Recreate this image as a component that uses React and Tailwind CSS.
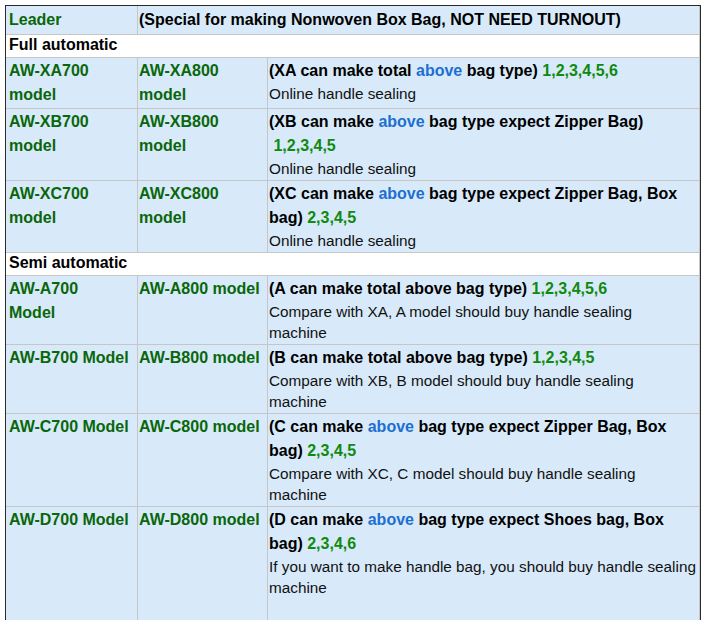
import { clsx } from "clsx";
import { twMerge } from "tailwind-merge";

const cn = (...args) => twMerge(clsx(args));

const green = "text-[#0a660a]";
const nums = "text-[#10890f]";
const blue = "text-[#1c6fd1]";

function Cell({ className, children, white }) {
  return (
    <div
      className={cn(
        "border-b border-r border-[#c6c6c6] py-px",
        white ? "bg-white" : "bg-[#d8eaf9]",
        className,
      )}
    >
      {children}
    </div>
  );
}

function Model({ lines }) {
  return (
    <div className={cn("font-bold leading-6", green)}>
      {lines.map((l) => (
        <div key={l} className="whitespace-nowrap">{l}</div>
      ))}
    </div>
  );
}

function Head({ children }) {
  return <div className="whitespace-nowrap font-bold leading-6 text-black">{children}</div>;
}

function Note({ children }) {
  return <div className="whitespace-nowrap text-[15.3px] leading-[21px] text-[#111]">{children}</div>;
}

function Section({ children }) {
  return (
    <Cell white className="col-span-3 pb-[2px] pl-[3px] pt-0 font-bold leading-5 text-black">
      {children}
    </Cell>
  );
}

function Row({ left, mid, children, tall }) {
  return (
    <>
      <Cell className="pl-[3px]"><Model lines={left} /></Cell>
      <Cell className="pl-px"><Model lines={mid} /></Cell>
      <Cell className={cn("pl-px", tall && "min-h-[130px]")}>{children}</Cell>
    </>
  );
}

export default function App() {
  return (
    <div className="min-h-[620px] bg-white pl-[5px] pt-[5px] font-['Liberation_Sans',Arial,sans-serif] text-[16px]">
      <div className="w-[696px] border-l border-r border-t border-[#2a2a2a]">
        <div className="grid grid-cols-[132px_130px_432px]">
          <Cell className={cn("py-[2px] pl-[3px] font-bold leading-6", green)}>Leader</Cell>
          <Cell className="col-span-2 py-[2px] pl-px font-bold leading-6 text-black">
            (Special for making Nonwoven Box Bag, NOT NEED TURNOUT)
          </Cell>

          <Section>Full automatic</Section>

          <Row left={["AW-XA700", "model"]} mid={["AW-XA800", "model"]}>
            <Head>
              (XA can make total <span className={blue}>above</span> bag type){" "}
              <span className={nums}>1,2,3,4,5,6</span>
            </Head>
            <Note>Online handle sealing</Note>
          </Row>

          <Row left={["AW-XB700", "model"]} mid={["AW-XB800", "model"]}>
            <Head>
              (XB can make <span className={blue}>above</span> bag type expect Zipper Bag)
            </Head>
            <Head>
              <span className={nums}>{"\u00a01,2,3,4,5"}</span>
            </Head>
            <Note>Online handle sealing</Note>
          </Row>

          <Row left={["AW-XC700", "model"]} mid={["AW-XC800", "model"]}>
            <Head>
              (XC can make <span className={blue}>above</span> bag type expect Zipper Bag, Box
            </Head>
            <Head>
              bag) <span className={nums}>2,3,4,5</span>
            </Head>
            <Note>Online handle sealing</Note>
          </Row>

          <Section>Semi automatic</Section>

          <Row left={["AW-A700", "Model"]} mid={["AW-A800 model"]}>
            <Head>
              (A can make total above bag type) <span className={nums}>1,2,3,4,5,6</span>
            </Head>
            <Note>Compare with XA, A model should buy handle sealing</Note>
            <Note>machine</Note>
          </Row>

          <Row left={["AW-B700 Model"]} mid={["AW-B800 model"]}>
            <Head>
              (B can make total above bag type) <span className={nums}>1,2,3,4,5</span>
            </Head>
            <Note>Compare with XB, B model should buy handle sealing</Note>
            <Note>machine</Note>
          </Row>

          <Row left={["AW-C700 Model"]} mid={["AW-C800 model"]}>
            <Head>
              (C can make <span className={blue}>above</span> bag type expect Zipper Bag, Box
            </Head>
            <Head>
              bag) <span className={nums}>2,3,4,5</span>
            </Head>
            <Note>Compare with XC, C model should buy handle sealing</Note>
            <Note>machine</Note>
          </Row>

          <Row left={["AW-D700 Model"]} mid={["AW-D800 model"]} tall>
            <Head>
              (D can make <span className={blue}>above</span> bag type expect Shoes bag, Box
            </Head>
            <Head>
              bag) <span className={nums}>2,3,4,6</span>
            </Head>
            <Note>If you want to make handle bag, you should buy handle sealing</Note>
            <Note>machine</Note>
          </Row>
        </div>
      </div>
    </div>
  );
}
